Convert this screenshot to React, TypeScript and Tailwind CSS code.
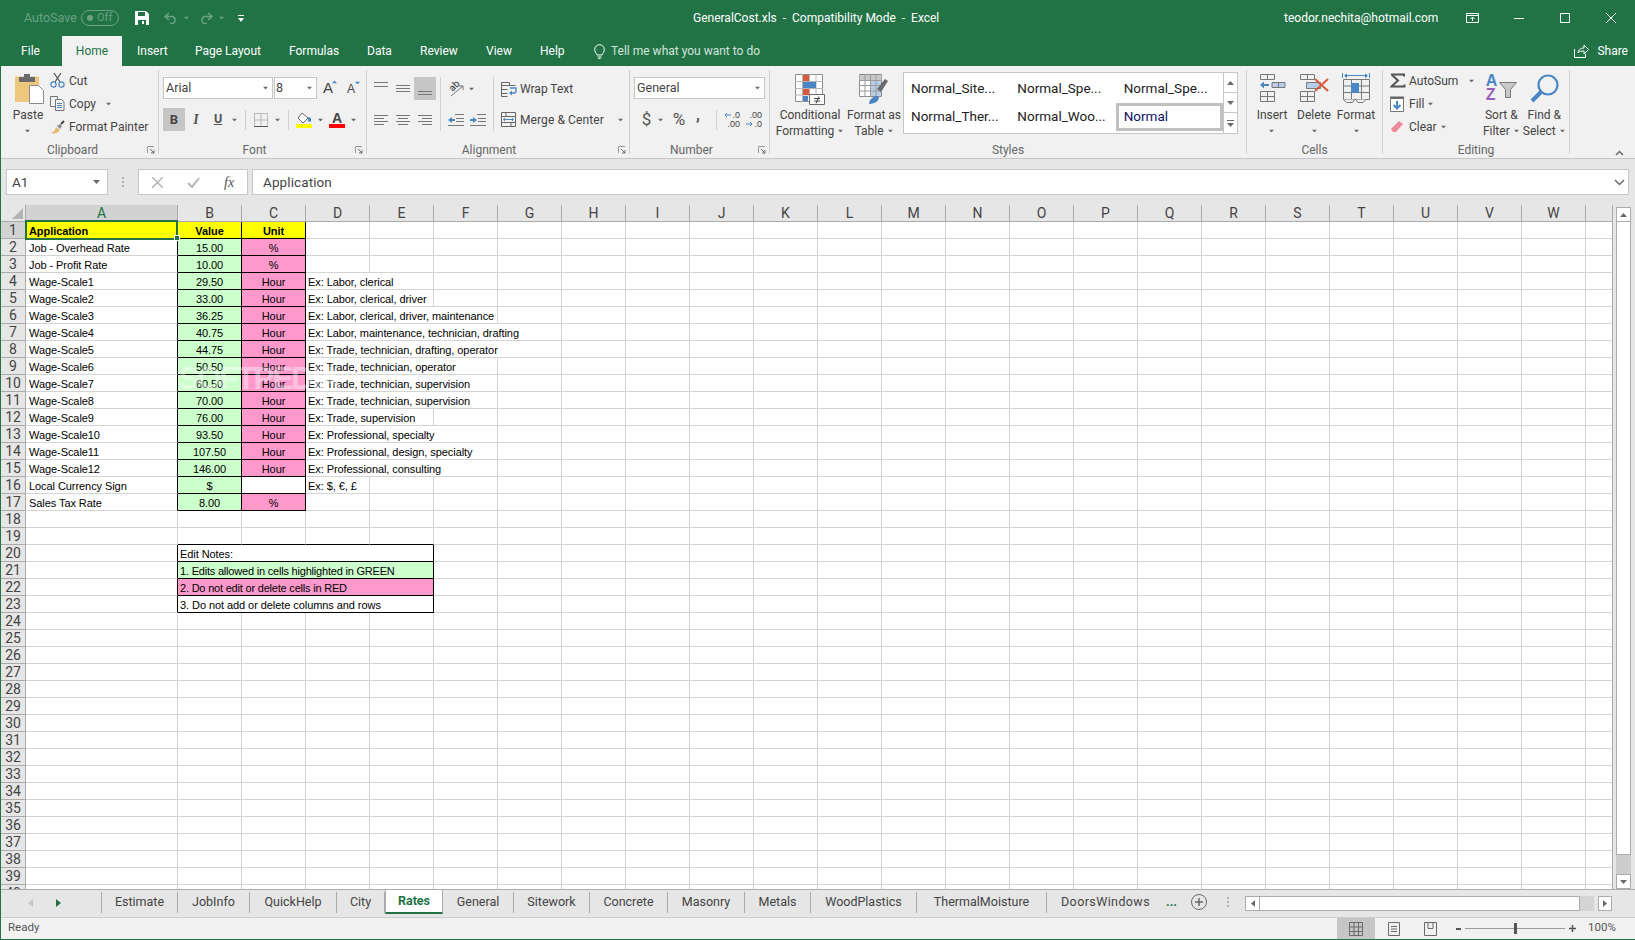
import type { ReactNode } from 'react';

const GRAY = '#6a6a6a';
const BLUE = '#4a86c4';
const GREEN = '#217346';

function Ic({ w, h, className, children }: { w: number; h: number; className?: string; children: ReactNode }) {
  return (
    <svg width={w} height={h} viewBox={`0 0 ${w} ${h}`} className={`shrink-0 block ${className ?? ''}`} fill="none">
      {children}
    </svg>
  );
}

function Caret({ className, color = GRAY }: { className?: string; color?: string }) {
  return (
    <Ic w={7} h={4} className={className}>
      <path d="M0 0h7L3.5 4z" fill={color} />
    </Ic>
  );
}

function Launcher() {
  return (
    <Ic w={8} h={8} className="absolute right-[3px] top-[2px]">
      <path d="M.5 7V.5H7" stroke="#9a9a9a" />
      <path d="M3 3l4 4M7 4v3H4" stroke="#6a6a6a" />
    </Ic>
  );
}

function Group({ w, label, launcher, labelPad, children }: { w: string; label: string; launcher?: boolean; labelPad?: string; children: ReactNode }) {
  return (
    <div className={`${w} h-[84px] shrink-0 border-r border-[#d0d0d0]`}>
      <div className="h-[74px] flex">{children}</div>
      <div className={`relative h-[12px] leading-[12px] text-center text-[12px] text-[#666666] ${labelPad ?? ''}`}>
        {label}
        {launcher && <Launcher />}
      </div>
    </div>
  );
}

function BigLabel({ a, b, caret = true }: { a: string; b?: string; caret?: boolean }) {
  return (
    <div className="text-center text-[12px] leading-[16px] text-[#444444] whitespace-nowrap">
      <div>{a}</div>
      <div className="flex justify-center items-center h-[16px] gap-[3px]">
        {b}
        {caret && <Caret className="scale-75" />}
      </div>
    </div>
  );
}

function SmallRow({ icon, text, caret }: { icon: ReactNode; text: string; caret?: string }) {
  return (
    <div className="h-[23px] flex items-center whitespace-nowrap text-[12px] text-[#444444]">
      <div className="w-[19px] flex justify-start">{icon}</div>
      <span>{text}</span>
      {caret && <Caret className={`scale-75 ${caret}`} />}
    </div>
  );
}

function AlignLines({ lines }: { lines: [number, number, number][] }) {
  return (
    <Ic w={16} h={16}>
      {lines.map(([x, y, w], i) => (
        <path key={i} d={`M${x} ${y + 0.5}h${w}`} stroke="#777777" />
      ))}
    </Ic>
  );
}

function AlignBtn({ lines, active }: { lines: [number, number, number][]; active?: boolean }) {
  return (
    <div className={`w-[22px] h-[23px] flex items-center justify-center ${active ? 'bg-[#c6c6c6]' : ''}`}>
      <AlignLines lines={lines} />
    </div>
  );
}

function TitleBar() {
  const dim = '#68a283';
  return (
    <div className="h-[36px] flex items-center bg-[#217346] text-white text-[12.5px] whitespace-nowrap">
      <span className="ml-[23px] w-[50px] text-[#68a283]">AutoSave</span>
      <div className="ml-[7px] w-[38px] h-[16px] rounded-full border border-[#68a283] flex items-center pl-[5px] gap-[4px] text-[11px] text-[#68a283]">
        <span className="w-[6px] h-[6px] rounded-full bg-[#68a283]" />
        Off
      </div>
      <Ic w={14} h={14} className="ml-[16px]">
        <path d="M0 0h11l3 3v11H0z" fill="#fff" />
        <path d="M3 1h7v4H3zM3 9h8v5H3z" fill={GREEN} />
        <path d="M7 10h2v3H7z" fill="#fff" />
      </Ic>
      <Ic w={14} h={12} className="ml-[15px]">
        <path d="M5 1L1 4.5 5 8M1.5 4.5H9a4 4 0 0 1 0 7H6" stroke={dim} strokeWidth="1.6" />
      </Ic>
      <Caret color={dim} className="ml-[5px] scale-75" />
      <Ic w={14} h={12} className="ml-[9px]">
        <path d="M9 1l4 3.5L9 8M12.5 4.5H5a4 4 0 0 0 0 7h3" stroke={dim} strokeWidth="1.6" />
      </Ic>
      <Caret color={dim} className="ml-[5px] scale-75" />
      <Ic w={6} h={7} className="ml-[13px]">
        <path d="M0 .5h6" stroke="#fff" />
        <path d="M0 3h6L3 7z" fill="#fff" />
      </Ic>
      <span className="ml-[449px] w-[246px] text-[12px]">GeneralCost.xls&nbsp; -&nbsp; Compatibility Mode&nbsp; -&nbsp; Excel</span>
      <span className="ml-[345px] w-[156px] text-[12px]">teodor.nechita@hotmail.com</span>
      <Ic w={13} h={10} className="ml-[26px]">
        <path d="M.5.5h12v9H.5zM.5 2.5h12M6.5 8V4M4.5 6l2-2 2 2" stroke="#fff" />
      </Ic>
      <Ic w={10} h={1} className="ml-[35px]">
        <path d="M0 .5h10" stroke="#fff" />
      </Ic>
      <Ic w={10} h={10} className="ml-[36px]">
        <path d="M.5.5h9v9h-9z" stroke="#fff" />
      </Ic>
      <Ic w={10} h={10} className="ml-[36px]">
        <path d="M0 0l10 10M10 0L0 10" stroke="#fff" />
      </Ic>
    </div>
  );
}

function MenuBar() {
  const item = 'h-full flex items-center';
  return (
    <div className="h-[30px] flex bg-[#217346] text-white text-[12px] whitespace-nowrap">
      <span className={`${item} w-[61px] justify-center pr-[2px]`}>File</span>
      <span className={`${item} w-[60px] justify-center bg-[#f1f1f1] text-[#217346]`}>Home</span>
      <span className={`${item} w-[73px] pl-[15px]`}>Insert</span>
      <span className={`${item} w-[94px]`}>Page Layout</span>
      <span className={`${item} w-[78px]`}>Formulas</span>
      <span className={`${item} w-[53px]`}>Data</span>
      <span className={`${item} w-[66px]`}>Review</span>
      <span className={`${item} w-[54px]`}>View</span>
      <span className={`${item} w-[54px]`}>Help</span>
      <div className={`${item} gap-[6px] text-[#d3e3da]`}>
        <Ic w={11} h={15}>
          <path d="M3 11C2 8.5.7 8 .7 5.5a4.8 4.8 0 0 1 9.6 0C10.3 8 9 8.5 8 11zM3.5 13h4M4.5 14.5h2" stroke="#fff" />
        </Ic>
        Tell me what you want to do
      </div>
      <div className={`${item} ml-auto pr-[7px] gap-[8px]`}>
        <Ic w={15} h={14}>
          <path d="M.5 5v8.5h11V10M4 9c0-3 2.5-5 6-5V1l4.5 4.5L10 10V7c-3 0-5 .5-6 2z" stroke="#fff" />
        </Ic>
        Share
      </div>
    </div>
  );
}

function Clipboard() {
  return (
    <Group w="w-[158px]" label="Clipboard" launcher labelPad="pr-[14px]">
      <div className="w-[47px] pl-[7px] flex flex-col items-center">
        <Ic w={29} h={30} className="mt-[4px] ml-[2px]">
          <path d="M0 3.5a1 1 0 0 1 1-1h22a1 1 0 0 1 1 1V28H0z" fill="#eec77f" />
          <path d="M4 3h5V0h6v3h5v5H4z" fill="#6a6a6a" />
          <path d="M14.5 11.5h9l5 5v13h-14z" fill="#fff" stroke="#8a8a8a" />
        </Ic>
        <div className="mt-[3px]">
          <BigLabel a="Paste" />
        </div>
      </div>
      <div className="pl-[2px] -mt-px">
        <SmallRow
          text="Cut"
          icon={
            <Ic w={15} h={15}>
              <path d="M5 9L11 0M10 9L4 0" stroke="#5a5a5a" strokeWidth="1.3" />
              <circle cx="3.5" cy="11.5" r="2.6" stroke={BLUE} strokeWidth="1.2" />
              <circle cx="11.5" cy="11.5" r="2.6" stroke={BLUE} strokeWidth="1.2" />
            </Ic>
          }
        />
        <div className="flex items-center">
          <SmallRow
            text="Copy"
            icon={
              <Ic w={15} h={15}>
                <path d="M.5.5h7v10h-7z" stroke="#777777" />
                <path d="M5.5 3.5h6l2.5 2.5v8.5H5.5z" fill="#f1f1f1" stroke="#777777" />
                <path d="M7 7.5h5M7 9.5h5M7 11.5h5" stroke={BLUE} />
              </Ic>
            }
          />
          <Caret className="ml-[9px] scale-75" />
        </div>
        <SmallRow
          text="Format Painter"
          icon={
            <Ic w={16} h={14}>
              <path d="M1 13c3-1 4-3 5-6l4 3c-2 3-5 4-9 3z" fill="#e8b971" />
              <path d="M7 6l3 3 2-3-2-2z" fill="#8a8a8a" />
              <path d="M11 4l3-3" stroke="#444444" strokeWidth="2" />
            </Ic>
          }
        />
      </div>
    </Group>
  );
}

function Font() {
  return (
    <Group w="w-[208px]" label="Font" launcher labelPad="pr-[16px]">
      <div className="pl-[4px] pt-[7px] text-[#444444]">
        <div className="h-[22px] flex items-center">
          <div className="w-[110px] h-[22px] bg-white border border-[#c6c6c6] flex items-center justify-between pl-[2px] pr-[3px] text-[12.5px]">
            Arial
            <Caret className="scale-75" />
          </div>
          <div className="ml-[1px] w-[43px] h-[22px] bg-white border border-[#c6c6c6] flex items-center justify-between pl-[1px] pr-[3px] text-[12.5px]">
            8
            <Caret className="scale-75" />
          </div>
          <div className="ml-[6px] w-[17px] flex items-start font-['Liberation_Sans',sans-serif] text-[15px] leading-[16px]">
            A
            <Caret color={BLUE} className="scale-75 -ml-[2px] -rotate-180" />
          </div>
          <div className="ml-[7px] w-[17px] flex items-start font-['Liberation_Sans',sans-serif] text-[12px] leading-[16px] pt-[1px]">
            A
            <Caret color={BLUE} className="scale-75 -ml-[1px]" />
          </div>
        </div>
        <div className="mt-[9px] h-[23px] flex items-center">
          <div className="w-[22px] h-[23px] bg-[#c6c6c6] flex items-center justify-center font-bold text-[13px]">B</div>
          <div className="w-[22px] text-center italic font-['Liberation_Serif',serif] text-[14px] font-bold text-[#555555]">I</div>
          <div className="w-[22px] text-center underline font-bold text-[12.5px] text-[#555555]">U</div>
          <Caret className="ml-[2px] scale-75" />
          <div className="ml-[7px] h-[20px] border-l border-[#d0d0d0]" />
          <Ic w={14} h={14} className="ml-[8px]">
            <path d="M.5.5h13v13H.5zM7 .5v13M.5 7h13" stroke="#8a8a8a" strokeDasharray="1 1" />
            <path d="M0 13.5h14" stroke="#555555" />
          </Ic>
          <Caret className="ml-[6px] scale-75" />
          <div className="ml-[7px] h-[20px] border-l border-[#d0d0d0]" />
          <div className="ml-[7px] w-[16px]">
            <Ic w={16} h={12}>
              <path d="M6 1l6 5-5 5-5-5z" fill="#fff" stroke="#6a6a6a" />
              <path d="M12 5l3 1v3a2 2 0 0 1-3 0z" fill={BLUE} />
            </Ic>
            <div className="h-[4px] bg-[#ffff00]" />
          </div>
          <Caret className="ml-[5px] scale-75" />
          <div className="ml-[5px] w-[16px]">
            <div className="h-[12px] leading-[13px] text-center font-bold font-['Liberation_Sans',sans-serif] text-[14px]">A</div>
            <div className="h-[4px] bg-[#ff0000]" />
          </div>
          <Caret className="ml-[5px] scale-75" />
        </div>
      </div>
    </Group>
  );
}

function Alignment() {
  return (
    <Group w="w-[263px]" label="Alignment" launcher labelPad="pr-[18px]">
      <div className="pl-[3px] pt-[7px] flex">
        <div className="w-[66px]">
          <div className="flex">
            <AlignBtn lines={[[1, 1, 14], [1, 5, 14]]} />
            <AlignBtn lines={[[1, 4, 14], [1, 7, 14], [1, 10, 14]]} />
            <AlignBtn active lines={[[1, 10, 14], [1, 13, 14]]} />
          </div>
          <div className="flex mt-[8px]">
            <AlignBtn lines={[[1, 3, 14], [1, 6, 10], [1, 9, 14], [1, 12, 10]]} />
            <AlignBtn lines={[[1, 3, 14], [3, 6, 10], [1, 9, 14], [3, 12, 10]]} />
            <AlignBtn lines={[[1, 3, 14], [5, 6, 10], [1, 9, 14], [5, 12, 10]]} />
          </div>
        </div>
        <div className="ml-[4px] w-[1px] h-[54px] bg-[#d0d0d0]" />
        <div className="w-[52px] pl-[7px]">
          <div className="h-[23px] flex items-center">
            <div className="relative w-[16px] h-[16px]">
              <span className="absolute left-[1px] -top-[1px] -rotate-45 text-[10px] leading-[12px] font-medium text-[#555555]">ab</span>
              <Ic w={16} h={16} className="absolute left-0 top-0">
                <path d="M3 15L15 5M15 5h-4M15 5v4" stroke="#777777" />
              </Ic>
            </div>
            <Caret className="ml-[4px] scale-75" />
          </div>
          <div className="mt-[8px] h-[23px] flex items-center gap-[6px]">
            <Ic w={16} h={14}>
              <path d="M7 1.5h9M8 5.5h8M8 8.5h8M0 12.5h16" stroke="#777777" />
              <path d="M0 7l4-3v2h3v2H4v2z" fill={BLUE} />
            </Ic>
            <Ic w={16} h={14}>
              <path d="M7 1.5h9M8 5.5h8M8 8.5h8M0 12.5h16" stroke="#777777" />
              <path d="M7 7L3 4v2H0v2h3v2z" fill={BLUE} />
            </Ic>
          </div>
        </div>
        <div className="w-[1px] h-[54px] bg-[#d0d0d0]" />
        <div className="pl-[7px] text-[12px] text-[#444444] whitespace-nowrap">
          <div className="h-[23px] pt-[1px] flex items-center gap-[3px]">
            <Ic w={16} h={15}>
              <path d="M.5.5h8v3h-8zM.5 3.5h14M.5 7.5h6M.5 11.5h6M.5.5v14h6" stroke="#666666" />
              <path d="M9 6h6v3a2 2 0 0 1-2 2H10" stroke={BLUE} strokeWidth="1.3" />
              <path d="M8 11l3-2.5v5z" fill={BLUE} />
            </Ic>
            Wrap Text
          </div>
          <div className="mt-[8px] h-[23px] flex items-center gap-[4px] tracking-[0.1px]">
            <Ic w={15} h={15}>
              <path d="M.5.5h14v14H.5zM.5 4.5h14M.5 10.5h14M5 .5v4M10 10.5v4" stroke="#666666" />
              <path d="M3 7.5h9" stroke={BLUE} />
              <path d="M2 7.5l2-2v4zM13 7.5l-2-2v4z" fill={BLUE} />
            </Ic>
            Merge &amp; Center
            <Caret className="ml-[9px] scale-75" />
          </div>
        </div>
      </div>
    </Group>
  );
}

function NumberGroup() {
  return (
    <Group w="w-[140px]" label="Number" launcher labelPad="pr-[16px]">
      <div className="pl-[4px] pt-[7px] text-[#444444]">
        <div className="w-[131px] h-[22px] bg-white border border-[#c6c6c6] flex items-center justify-between pl-[2px] pr-[3px] text-[12.5px]">
          General
          <Caret className="scale-75" />
        </div>
        <div className="mt-[9px] h-[23px] flex items-center">
          <span className="ml-[7px] w-[11px] text-[17px] text-center text-[#555555]">$</span>
          <Caret className="ml-[5px] scale-75" />
          <span className="ml-[6px] w-[18px] text-[17px] text-center text-[#555555]">%</span>
          <span className="ml-[8px] w-[6px] -mt-[9px] text-[16px] font-bold text-[#555555] leading-[16px]">,</span>
          <div className="ml-[14px] h-[20px] border-l border-[#d0d0d0]" />
          <div className="ml-[7px] w-[16px] h-[18px] relative text-[9px] leading-[9px] text-[#444444] font-['Liberation_Sans',sans-serif] text-right">
            <div>.0</div>
            <div>.00</div>
            <Ic w={7} h={6} className="absolute left-0 top-[1px]">
              <path d="M1 3h6M3 1L1 3l2 2" stroke={BLUE} />
            </Ic>
          </div>
          <div className="ml-[6px] w-[16px] h-[18px] relative text-[9px] leading-[9px] text-[#444444] font-['Liberation_Sans',sans-serif] text-right">
            <div>.00</div>
            <div>.0</div>
            <Ic w={7} h={6} className="absolute left-0 top-[10px]">
              <path d="M0 3h6M4 1l2 2-2 2" stroke={BLUE} />
            </Ic>
          </div>
        </div>
      </div>
    </Group>
  );
}

function Styles() {
  const names = ['Normal_Site...', 'Normal_Spe...', 'Normal_Spe...', 'Normal_Ther...', 'Normal_Woo...'];
  const arrow = 'h-[20px] flex items-center justify-center border-b border-[#c6c6c6]';
  return (
    <Group w="w-[477px]" label="Styles">
      <div className="pl-[8px] flex">
        <div className="w-[64px] flex flex-col items-center">
          <Ic w={30} h={31} className="mt-[4px]">
            <path d="M.5.5h27v27H.5z" fill="#fff" stroke="#8c8c8c" />
            <path d="M7.5 0v28M14.5 0v28M21 0v28M0 7.5h28M0 14.5h28M0 21h28" stroke="#b5b5b5" />
            <path d="M8 1h6v6H8zM8 15h6v6H8z" fill="#d9593a" />
            <path d="M8 8h13v6H8zM8 22h5v5H8z" fill={BLUE} />
            <path d="M14.5 20.5h15v10h-15z" fill="#fff" stroke="#6a6a6a" />
            <path d="M19 24.5h6M19 27h6M24 22.5l-3 7" stroke="#444444" />
          </Ic>
          <div className="mt-[2px]">
            <BigLabel a="Conditional" b="Formatting" />
          </div>
        </div>
        <div className="w-[64px] flex flex-col items-center">
          <Ic w={30} h={31} className="mt-[4px]">
            <path d="M.5.5h22v22H.5z" fill="#fff" stroke="#8c8c8c" />
            <path d="M.5 1h22v5H.5z" fill="#c8c8c8" />
            <path d="M11 7h11v15H11z" fill="#b7cfe6" />
            <path d="M6 0v23M11.5 0v23M17 0v23M0 6.5h23M0 11.5h23M0 17h23" stroke="#9a9a9a" />
            <path d="M18 15l8-10 3 2-7 11z" fill="#6a6a6a" />
            <path d="M10 30c0-5 5-8 8-8l2 1c0 3-3 7-10 7z" fill={BLUE} />
          </Ic>
          <div className="mt-[2px]">
            <BigLabel a="Format as" b="Table" />
          </div>
        </div>
        <div className="-ml-[3px] mt-[2px] h-[62px] w-[335px] flex">
          <div className="w-[321px] h-[62px] bg-white border border-[#c6c6c6] grid grid-cols-3 grid-rows-[30px_30px] text-[13.5px] text-[#222222] whitespace-nowrap">
            {names.map((n, i) => (
              <div key={i} className={`pl-[7px] flex items-center ${i > 2 ? 'h-[27px]' : 'h-[30px]'}`}>
                {n}
              </div>
            ))}
            <div className="ml-[-1px] h-[28px] border-[3px] border-[#c0c0c0] pl-[5px] pb-[2px] flex items-center text-[#111166]">Normal</div>
          </div>
          <div className="w-[14px] h-[62px] bg-white border border-l-0 border-[#c6c6c6]">
            <div className={arrow}>
              <Caret className="rotate-180" />
            </div>
            <div className={arrow}>
              <Caret />
            </div>
            <div className="h-[20px] flex flex-col items-center justify-center gap-[2px]">
              <div className="w-[7px] h-[1px] bg-[#6a6a6a]" />
              <Caret />
            </div>
          </div>
        </div>
      </div>
    </Group>
  );
}

function Cells() {
  const btn = 'w-[42px] flex flex-col items-center';
  const line = '#777777';
  return (
    <Group w="w-[136px]" label="Cells">
      <div className="pl-[4px] flex">
        <div className={btn}>
          <Ic w={27} h={28} className="mt-[4px] mb-[5px]">
            <path d="M1.5.5h14v5h-14zM8.5.5v5M1.5 17.5h14v10h-14zM8.5 17.5v10M1.5 22.5h14" stroke={line} />
            <path d="M13 8.5h13v5H13z" fill="#b7cfe6" stroke={line} />
            <path d="M19.5 8.5v5" stroke={line} />
            <path d="M1 11l4-3.5V10h5v2H5v2.500z" fill={BLUE} />
          </Ic>
          <BigLabel a="Insert" b="" />
        </div>
        <div className={btn}>
          <Ic w={29} h={28} className="mt-[4px] mb-[5px]">
            <path d="M.5.5h14v5H.5zM7.500.5v5M.5 17.5h14v10H.5zM7.500 17.500v10M.5 22.500h14" stroke={line} />
            <path d="M6.500 8.500h14v6h-14z" fill="#b7cfe6" stroke={line} />
            <path d="M15 5l13 12M28 5L15 17" stroke="#d9593a" strokeWidth="2" />
          </Ic>
          <BigLabel a="Delete" b="" />
        </div>
        <div className={btn}>
          <Ic w={28} h={31} className="mt-[3px] mb-[3px]">
            <path d="M.5 0v5M27.500 0v5M3 2.500h22" stroke={BLUE} />
            <path d="M2 2.500l3-2v5zM26 2.500l-3-2v5z" fill={BLUE} />
            <path d="M1.500 6.500h26v20h-26zM1.500 19.500h26M9.500 6.500v20M19.500 6.500v20M1.500 13h26" stroke={line} />
            <path d="M9 10h8v10H9z" fill={BLUE} />
            <path d="M1.500 26.500l3 3h6l2-3M14 26.500l2 3h5l3-3" fill="#f1f1f1" stroke={line} />
          </Ic>
          <BigLabel a="Format" b="" />
        </div>
      </div>
    </Group>
  );
}

function Editing() {
  return (
    <Group w="w-[187px]" label="Editing">
      <div className="pl-[7px] -mt-px">
        <div className="flex items-center">
          <SmallRow
            text="AutoSum"
            icon={
              <Ic w={16} h={15}>
                <path d="M1 1.500h13v2M1.500 1.500L8 7.500 1.500 13.500h13v-2" stroke="#555555" strokeWidth="2" />
              </Ic>
            }
          />
          <Caret className="ml-[10px] scale-75" />
        </div>
        <SmallRow
          text="Fill"
          caret="ml-[3px]"
          icon={
            <Ic w={15} h={16}>
              <path d="M.5 2.500h13v13H.5z" fill="#fff" stroke="#777777" />
              <path d="M0 .5h14v2H0z" fill="#666666" />
              <path d="M7 5v7M3.500 9L7 12.500 10.500 9" stroke={BLUE} strokeWidth="2" />
            </Ic>
          }
        />
        <SmallRow
          text="Clear"
          caret="ml-[3px]"
          icon={
            <Ic w={14} h={13}>
              <path d="M1 9l8-8 4 3-7 8H3z" fill="#ec8a9a" />
            </Ic>
          }
        />
      </div>
      <div className="ml-[1px] w-[50px] flex flex-col items-center">
        <div className="relative h-[31px] w-[31px] mt-[4px] font-bold font-['Liberation_Sans',sans-serif] text-[16px] leading-[14px]">
          <span className="absolute left-[0px] top-[0px] text-[#4a86c4]">A</span>
          <span className="absolute left-[0px] top-[14px] text-[#9a5fb8]">Z</span>
          <Ic w={18} h={16} className="absolute left-[13px] top-[8px]">
            <path d="M.5.5h17l-6 7v8h-5v-8z" fill="#c8c8c8" stroke="#7a7a7a" />
          </Ic>
        </div>
        <div className="mt-[2px]">
          <BigLabel a="Sort &" b="Filter" />
        </div>
      </div>
      <div className="-ml-[3px] w-[42px] flex flex-col items-center">
        <Ic w={29} h={29} className="mt-[4px] mb-[1px]">
          <circle cx="18" cy="11" r="9.500" stroke={BLUE} strokeWidth="2.200" />
          <path d="M11 18l-9 9" stroke={BLUE} strokeWidth="4" />
        </Ic>
        <div className="mt-[3px]">
          <BigLabel a="Find &" b="Select" />
        </div>
      </div>
    </Group>
  );
}

function Ribbon() {
  return (
    <div className="h-[93px] bg-[#f1f1f1] border-b border-[#c6c6c6] pt-[4px] flex">
      <Clipboard />
      <Font />
      <Alignment />
      <NumberGroup />
      <Styles />
      <Cells />
      <Editing />
      <div className="flex-1 flex justify-end items-end pr-[11px] pb-[2px]">
        <Ic w={9} h={6}>
          <path d="M1 5l3.500-3.500L8 5" stroke="#6a6a6a" strokeWidth="1.500" />
        </Ic>
      </div>
    </div>
  );
}

function FormulaBar() {
  return (
    <div className="h-[46px] pt-[10px] flex bg-[#e6e6e6] text-[13.5px] text-[#444444]">
      <div className="ml-[5px] w-[102px] h-[26px] bg-white border border-[#c6c6c6] flex items-center justify-between pl-[5px] pr-[7px]">
        A1
        <Caret />
      </div>
      <div className="w-[30px] h-[26px] flex flex-col items-center justify-center gap-[2px]">
        <span className="w-[2px] h-[2px] bg-[#b0b0b0]" />
        <span className="w-[2px] h-[2px] bg-[#b0b0b0]" />
        <span className="w-[2px] h-[2px] bg-[#b0b0b0]" />
      </div>
      <div className="w-[110px] h-[26px] bg-white border border-[#c6c6c6] flex items-center">
        <Ic w={11} h={11} className="ml-[13px]">
          <path d="M0 0l11 11M11 0L0 11" stroke="#b5b5b5" strokeWidth="1.500" />
        </Ic>
        <Ic w={13} h={11} className="ml-[24px]">
          <path d="M1 6l4 4 7-9" stroke="#b5b5b5" strokeWidth="2" />
        </Ic>
        <span className="ml-[24px] italic font-['Liberation_Serif',serif] text-[14px] text-[#555555]">fx</span>
      </div>
      <div className="ml-[4px] w-[1377px] h-[26px] bg-white border border-[#c6c6c6] flex items-center justify-between pl-[10px] pr-[3px] tracking-[0.1px]">
        Application
        <Ic w={11} h={7}>
          <path d="M1 1l4.500 4.500L10 1" stroke="#6a6a6a" strokeWidth="1.500" />
        </Ic>
      </div>
    </div>
  );
}

type Cell = { text?: string; span?: number; cls?: string };

const spanW: Record<number, string> = { 1: 'w-[64px]', 2: 'w-[128px]', 3: 'w-[192px]', 4: 'w-[256px]' };
const COLS = 'BCDEFGHIJKLMNOPQRSTUVW'.split('');
const scale: [string, string, string, number][] = [
  ['Wage-Scale1', '29.50', 'Ex: Labor, clerical', 2],
  ['Wage-Scale2', '33.00', 'Ex: Labor, clerical, driver', 2],
  ['Wage-Scale3', '36.25', 'Ex: Labor, clerical, driver, maintenance', 3],
  ['Wage-Scale4', '40.75', 'Ex: Labor, maintenance, technician, drafting', 4],
  ['Wage-Scale5', '44.75', 'Ex: Trade, technician, drafting, operator', 4],
  ['Wage-Scale6', '50.50', 'Ex: Trade, technician, operator', 3],
  ['Wage-Scale7', '60.50', 'Ex: Trade, technician, supervision', 3],
  ['Wage-Scale8', '70.00', 'Ex: Trade, technician, supervision', 3],
  ['Wage-Scale9', '76.00', 'Ex: Trade, supervision', 2],
  ['Wage-Scale10', '93.50', 'Ex: Professional, specialty', 3],
  ['Wage-Scale11', '107.50', 'Ex: Professional, design, specialty', 3],
  ['Wage-Scale12', '146.00', 'Ex: Professional, consulting', 3],
];

const boxed = 'border-r border-b border-black justify-center';
const greenC = `${boxed} bg-[#ccffcc]`;
const pinkC = `${boxed} bg-[#ff99cc]`;

function dataRow(a: string, b: string, c: string, d?: string, span = 1): { a: string; cells: Cell[]; black: boolean } {
  const cells: Cell[] = [
    { text: b, cls: greenC },
    { text: c, cls: c ? pinkC : boxed },
  ];
  if (d) cells.push({ text: d, span, cls: 'pl-[2px]' });
  return { a, cells, black: true };
}

const rowData: Record<number, { a?: string; cells: Cell[]; black?: boolean }> = {
  1: {
    a: 'Application',
    black: true,
    cells: [
      { text: 'Value', cls: `${boxed} bg-[#ffff00] font-bold` },
      { text: 'Unit', cls: `${boxed} bg-[#ffff00] font-bold` },
    ],
  },
  2: dataRow('Job - Overhead Rate', '15.00', '%'),
  3: dataRow('Job - Profit Rate', '10.00', '%'),
  16: dataRow('Local Currency Sign', '$', '', 'Ex: $, €, £'),
  17: dataRow('Sales Tax Rate', '8.00', '%'),
  19: {
    cells: [
      { cls: 'border-r border-b border-b-black' },
      { cls: 'border-r border-b border-b-black' },
      { cls: 'border-r border-b border-b-black' },
      { cls: 'border-r border-b border-b-black' },
    ],
  },
  20: { black: true, cells: [{ text: 'Edit Notes:', span: 4, cls: 'border-r border-b border-black pl-[2px]' }] },
  21: { black: true, cells: [{ text: '1. Edits allowed in cells highlighted in GREEN', span: 4, cls: 'border-r border-b border-black pl-[2px] bg-[#ccffcc] tracking-[-0.2px]' }] },
  22: { black: true, cells: [{ text: '2. Do not edit or delete cells in RED', span: 4, cls: 'border-r border-b border-black pl-[2px] bg-[#ff99cc] tracking-[-0.2px]' }] },
  23: { black: true, cells: [{ text: '3. Do not add or delete columns and rows', span: 4, cls: 'border-r border-b border-black pl-[2px]' }] },
};
scale.forEach(([a, b, d, span], i) => {
  rowData[i + 4] = dataRow(a, b, 'Hour', d, span);
});

function Row({ n }: { n: number }) {
  const data = rowData[n];
  const cells = data?.cells ?? [];
  const used = cells.reduce((t, c) => t + (c.span ?? 1), 0);
  const rest = COLS.length - used;
  const first = n === 1;
  return (
    <div className="h-[17px] flex">
      <div className={`w-[25px] shrink-0 border-r border-b border-[#ababab] flex items-center justify-center font-['Roboto',sans-serif] text-[14px] tracking-normal text-[#444444] ${first ? 'bg-[#d2d2d2]' : 'bg-[#e6e6e6]'}`}>
        {n}
      </div>
      <div className={`relative w-[152px] shrink-0 border-b border-[#d4d4d4] border-r ${data?.black ? 'border-r-black' : 'border-r-[#d4d4d4]'} pl-[3px] pt-px flex items-center ${first ? 'bg-[#ffff00] font-bold' : ''}`}>
        {data?.a}
        {first && (
          <>
            <div className="absolute -left-[1px] -top-[2px] w-[153px] h-[20px] border-2 border-[#217346]" />
            <div className="absolute -right-[3px] top-[13px] w-[6px] h-[6px] bg-[#217346] border border-white z-10" />
          </>
        )}
      </div>
      {cells.map((c, i) => (
        <div key={i} className={`${spanW[c.span ?? 1]} shrink-0 pt-px flex items-center border-r border-b border-[#d4d4d4] ${c.cls ?? ''}`}>
          {c.text}
        </div>
      ))}
      {Array.from({ length: rest }, (_, i) => (
        <div key={i} className="w-[64px] shrink-0 border-r border-b border-[#d4d4d4]" />
      ))}
      <div className="w-[26px] shrink-0 border-b border-[#d4d4d4]" />
    </div>
  );
}

function Sheet() {
  const rows = Array.from({ length: 40 }, (_, i) => i + 1);
  return (
    <div className="h-[684px] flex bg-[#e6e6e6]">
      <div className="relative w-[1612px] h-full overflow-hidden bg-white border-r border-[#ababab] font-['Liberation_Sans',sans-serif] text-[11px] tracking-[-0.07px] leading-[16px] text-black whitespace-nowrap">
        <div className="h-[17px] flex bg-[#e6e6e6] font-['Roboto',sans-serif] text-[14px] tracking-normal text-[#444444]">
          <div className="w-[25px] shrink-0 border-r border-b border-[#ababab] flex items-end justify-end p-[2px]">
            <Ic w={11} h={11}>
              <path d="M11 0v11H0z" fill="#b4b4b4" />
            </Ic>
          </div>
          <div className="w-[152px] shrink-0 bg-[#d2d2d2] border-r border-b border-[#ababab] border-b-[#217346] text-center text-[#217346]">A</div>
          {COLS.map((c) => (
            <div key={c} className="w-[64px] shrink-0 border-r border-b border-[#ababab] text-center">
              {c}
            </div>
          ))}
          <div className="w-[26px] shrink-0 border-b border-[#ababab]" />
        </div>
        {rows.map((n) => (
          <Row key={n} n={n} />
        ))}
        <div className="absolute left-[177px] top-[157px] text-[32px] leading-[32px] tracking-[-2.5px] font-bold text-white/40 pointer-events-none">SOFTPEDIA</div>
      </div>
      <div className="ml-[3px] w-[15px] pt-[2px] flex flex-col">
        <div className="h-[15px] bg-white border border-[#ababab] flex items-center justify-center">
          <Caret className="rotate-180" />
        </div>
        <div className="h-[633px] bg-white border-x border-b border-[#ababab]" />
        <div className="h-[19px] bg-[#cdcdcd]" />
        <div className="h-[15px] bg-white border border-[#ababab] flex items-center justify-center">
          <Caret />
        </div>
      </div>
    </div>
  );
}

const tabs: [string, string][] = [
  ['Estimate', 'w-[76px]'],
  ['JobInfo', 'w-[72px]'],
  ['QuickHelp', 'w-[87px]'],
  ['City', 'w-[48px]'],
];
const tabsAfter: [string, string][] = [
  ['General', 'w-[71px]'],
  ['Sitework', 'w-[76px]'],
  ['Concrete', 'w-[78px]'],
  ['Masonry', 'w-[77px]'],
  ['Metals', 'w-[66px]'],
  ['WoodPlastics', 'w-[106px]'],
  ['ThermalMoisture', 'w-[130px]'],
];

function SheetTab({ name, w }: { name: string; w: string }) {
  return <div className={`${w} h-[21px] mt-[2px] flex items-center justify-center border-r border-[#ababab]`}>{name}</div>;
}

function TabBar() {
  return (
    <div className="h-[28px] flex bg-[#e6e6e6] border-t border-[#ababab] text-[12.5px] text-[#444444] whitespace-nowrap">
      <div className="w-[101px] h-[21px] mt-[2px] border-r border-[#ababab] flex items-center">
        <Ic w={5} h={8} className="ml-[27px]">
          <path d="M5 0v8L0 4z" fill="#c6c6c6" />
        </Ic>
        <Ic w={5} h={8} className="ml-[23px]">
          <path d="M0 0v8l5-4z" fill={GREEN} />
        </Ic>
      </div>
      {tabs.map(([n, w]) => (
        <SheetTab key={n} name={n} w={w} />
      ))}
      <div className="w-[58px] h-[25px] -mt-px bg-white border-x border-t border-[#ababab] border-b-2 border-b-[#217346] flex items-center justify-center font-bold text-[#217346]">Rates</div>
      {tabsAfter.map(([n, w]) => (
        <SheetTab key={n} name={n} w={w} />
      ))}
      <div className="w-[144px] h-[21px] mt-[2px] pl-[14px] flex items-center">
        <span className="w-[105px] tracking-[0.4px]">DoorsWindows</span>
        <span className="font-bold text-[#217346]">...</span>
      </div>
      <Ic w={16} h={16} className="mt-[4px]">
        <circle cx="8" cy="8" r="7.500" stroke="#6a6a6a" />
        <path d="M8 4v8M4 8h8" stroke="#6a6a6a" strokeWidth="1.500" />
      </Ic>
      <div className="ml-[20px] mt-[7px] flex flex-col gap-[2px]">
        <span className="w-[2px] h-[2px] bg-[#b0b0b0]" />
        <span className="w-[2px] h-[2px] bg-[#b0b0b0]" />
        <span className="w-[2px] h-[2px] bg-[#b0b0b0]" />
      </div>
      <div className="ml-[16px] mt-[6px] h-[15px] flex">
        <div className="w-[15px] bg-white border border-[#ababab] flex items-center justify-center">
          <Ic w={4} h={7}>
            <path d="M4 0v7L0 3.500z" fill={GRAY} />
          </Ic>
        </div>
        <div className="w-[320px] bg-white border-y border-r border-[#ababab]" />
        <div className="w-[14px] bg-[#d4d4d4]" />
        <div className="ml-[4px] w-[14px] bg-white border border-[#ababab] flex items-center justify-center">
          <Ic w={4} h={7}>
            <path d="M0 0v7l4-3.500z" fill={GRAY} />
          </Ic>
        </div>
      </div>
    </div>
  );
}

function StatusBar() {
  return (
    <div className="h-[23px] flex items-center bg-[#f1f1f1] border-t border-[#cdcdcd] border-b border-b-[#217346] text-[11.5px] text-[#555555]">
      <span className="ml-[7px] w-[1329px] pb-[2px]">Ready</span>
      <div className="w-[38px] h-full bg-[#c6c6c6] flex items-center justify-center">
        <Ic w={14} h={14}>
          <path d="M.5.5h13v13H.5zM.5 5h13M.5 9.500h13M5 .5v13M9.500.5v13" stroke="#6a6a6a" />
        </Ic>
      </div>
      <Ic w={12} h={14} className="ml-[13px]">
        <path d="M.5.5h11v13H.5zM3 4.500h6M3 7h6M3 9.500h6" stroke="#6a6a6a" />
      </Ic>
      <Ic w={13} h={14} className="ml-[24px]">
        <path d="M.5.500h12v13H.5zM4 .5v6h5v-6" stroke="#6a6a6a" />
      </Ic>
      <div className="ml-[19px] w-[5px] h-[2px] bg-[#555555]" />
      <div className="ml-[4px] w-[100px] h-[1px] bg-[#9a9a9a] relative">
        <div className="absolute left-[49px] -top-[5px] w-[3px] h-[11px] bg-[#555555]" />
      </div>
      <Ic w={7} h={7} className="ml-[4px]">
        <path d="M3.500 0v7M0 3.500h7" stroke="#555555" strokeWidth="1.500" />
      </Ic>
      <span className="ml-[12px] pb-[2px]">100%</span>
    </div>
  );
}

export default function App() {
  return (
    <div className="w-[1635px] h-[940px] overflow-hidden border-l border-[#217346] font-['Roboto',sans-serif]">
      <TitleBar />
      <MenuBar />
      <Ribbon />
      <FormulaBar />
      <Sheet />
      <TabBar />
      <StatusBar />
    </div>
  );
}
